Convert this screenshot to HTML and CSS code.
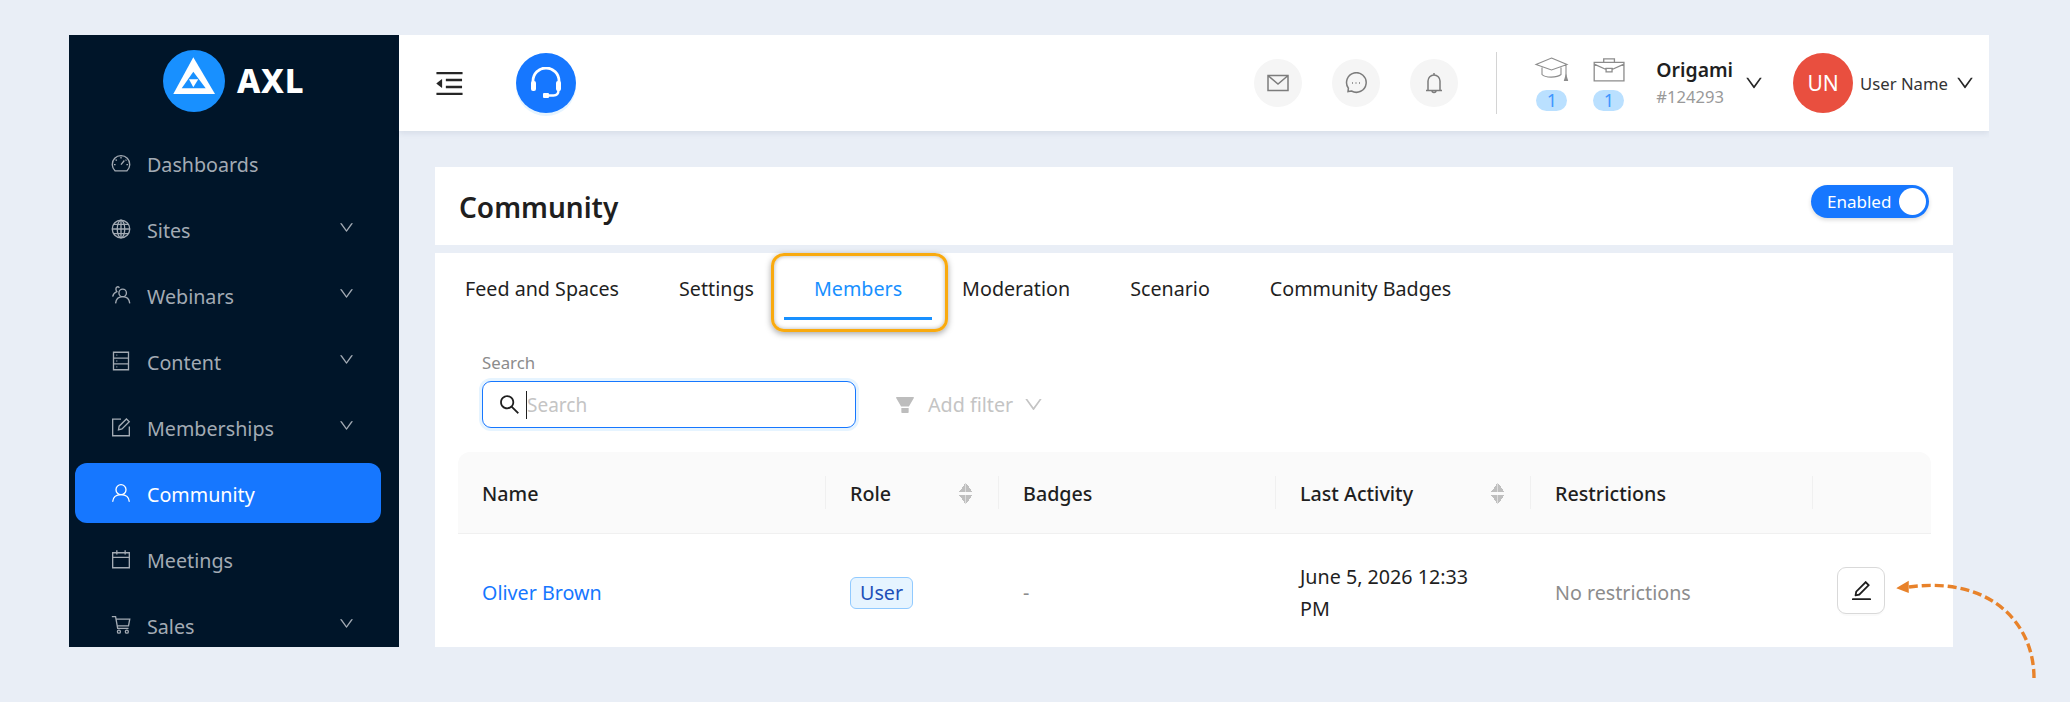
FILE: index.html
```html
<!DOCTYPE html>
<html lang="en">
<head>
    <meta charset="UTF-8">
    <meta name="viewport" content="width=device-width, initial-scale=1.0">
    <title>Community Members</title>
    <link rel="stylesheet" href="styles.css">
</head>
<body>

    <div class="app">

        <!-- Left navigation -->
        <aside class="sidebar">
            <div class="logo">
                <svg class="logo-mark" viewBox="0 0 62 62">
                    <circle cx="31" cy="31" r="31" fill="#1890ff"/>
                    <path d="M30.3 7.3L52 44H10.3z" fill="#fff"/>
                    <path d="M30.3 21.7L42.7 38.3H18.7z" fill="#1890ff"/>
                    <path d="M26 29.3H35.3L30.3 37.3z" fill="#fff"/>
                </svg>
                <span class="logo-text">AXL</span>
            </div>
            <nav class="nav">
                <div class="nav-item">
                    <svg class="nav-icon" viewBox="0 0 24 24"><path d="M5 21.5a10.5 10.5 0 1 1 14 0z"/><path d="M12 14l4-5M12 4.5v2M5.500 8l1.500 1M18.500 8l-1 1M3.500 14h2M18.500 14h2"/></svg>
                    <span class="nav-label">Dashboards</span>
                </div>
                <div class="nav-item">
                    <svg class="nav-icon" viewBox="0 0 24 24"><circle cx="12" cy="12" r="10.500"/><ellipse cx="12" cy="12" rx="4.500" ry="10.500"/><path d="M12 1.500v21M1.500 12h21M3 6.500h18M3 17.500h18"/></svg>
                    <span class="nav-label">Sites</span>
                    <svg class="nav-arrow" viewBox="64 64 896 896"><path d="M884 256h-75c-5.100 0-9.900 2.500-12.900 6.600L512 654.200 227.900 262.600c-3-4.100-7.800-6.600-12.900-6.600h-75c-6.500 0-10.300 7.400-6.500 12.700l352.600 486.100c12.800 17.600 39 17.600 51.700 0l352.600-486.100c3.900-5.300.1-12.700-6.400-12.700z"/></svg>
                </div>
                <div class="nav-item">
                    <svg class="nav-icon" viewBox="0 0 24 24"><circle cx="14" cy="9.500" r="4.500"/><path d="M5.500 22c.5-5 4-8 8.500-8s8 3 8.500 8M10 3.500C9.500 2.500 8.500 1.500 7 2.500 5.500 3.500 5.500 6 7 8c-2.500 1-4.500 3-5 6"/></svg>
                    <span class="nav-label">Webinars</span>
                    <svg class="nav-arrow" viewBox="64 64 896 896"><path d="M884 256h-75c-5.100 0-9.900 2.500-12.900 6.600L512 654.200 227.900 262.600c-3-4.100-7.800-6.600-12.900-6.600h-75c-6.500 0-10.300 7.400-6.500 12.700l352.600 486.100c12.800 17.600 39 17.600 51.700 0l352.600-486.100c3.900-5.300.1-12.700-6.400-12.700z"/></svg>
                </div>
                <div class="nav-item">
                    <svg class="nav-icon" viewBox="0 0 24 24"><path d="M3 1.500h18v21H3zM3 8.500h18M3 15.500h18M6.500 5h1M6.500 12h1M6.500 19h1"/></svg>
                    <span class="nav-label">Content</span>
                    <svg class="nav-arrow" viewBox="64 64 896 896"><path d="M884 256h-75c-5.100 0-9.900 2.500-12.900 6.600L512 654.200 227.900 262.600c-3-4.100-7.800-6.600-12.900-6.600h-75c-6.500 0-10.300 7.400-6.500 12.700l352.600 486.100c12.800 17.600 39 17.600 51.700 0l352.600-486.100c3.900-5.300.1-12.700-6.400-12.700z"/></svg>
                </div>
                <div class="nav-item">
                    <svg class="nav-icon" viewBox="0 0 24 24"><path d="M12 2.500H2v20h20v-11"/><path d="M9 15.500l.8-4.500L18.500 2.300l3.400 3.400-8.700 8.700z"/></svg>
                    <span class="nav-label">Memberships</span>
                    <svg class="nav-arrow" viewBox="64 64 896 896"><path d="M884 256h-75c-5.100 0-9.900 2.500-12.900 6.600L512 654.200 227.900 262.600c-3-4.100-7.800-6.600-12.900-6.600h-75c-6.500 0-10.300 7.400-6.500 12.700l352.600 486.100c12.800 17.600 39 17.600 51.700 0l352.600-486.100c3.900-5.300.1-12.700-6.400-12.700z"/></svg>
                </div>
                <div class="nav-item nav-item-active">
                    <svg class="nav-icon" viewBox="0 0 24 24"><circle cx="12" cy="8" r="6"/><path d="M2 22.500c.5-5.500 4.500-8.500 10-8.500s9.500 3 10 8.500"/></svg>
                    <span class="nav-label">Community</span>
                </div>
                <div class="nav-item">
                    <svg class="nav-icon" viewBox="0 0 24 24"><path d="M2 4.500h20v18H2zM2 10h20M7 1.500v5M17 1.500v5"/></svg>
                    <span class="nav-label">Meetings</span>
                </div>
                <div class="nav-item">
                    <svg class="nav-icon" viewBox="0 0 24 24"><path d="M1 2h4.500l2.500 14h13M6 5h16.500l-1.500 8H7.500"/><circle cx="9.500" cy="20" r="1.800"/><circle cx="19" cy="20" r="1.800"/></svg>
                    <span class="nav-label">Sales</span>
                    <svg class="nav-arrow" viewBox="64 64 896 896"><path d="M884 256h-75c-5.100 0-9.900 2.500-12.900 6.600L512 654.200 227.900 262.600c-3-4.100-7.800-6.600-12.900-6.600h-75c-6.500 0-10.300 7.400-6.500 12.700l352.600 486.100c12.800 17.600 39 17.600 51.700 0l352.600-486.100c3.900-5.300.1-12.700-6.400-12.700z"/></svg>
                </div>
            </nav>
        </aside>

        <div class="main">

            <!-- Top bar -->
            <header class="topbar">
                <svg class="menu-fold" viewBox="112 160 800 704"><path d="M408 442h480c4.400 0 8-3.600 8-8v-56c0-4.400-3.600-8-8-8H408c-4.400 0-8 3.600-8 8v56c0 4.400 3.600 8 8 8zm-8 204c0 4.400 3.600 8 8 8h480c4.400 0 8-3.600 8-8v-56c0-4.400-3.600-8-8-8H408c-4.400 0-8 3.600-8 8v56zm504-486H120c-4.400 0-8 3.600-8 8v56c0 4.400 3.600 8 8 8h784c4.400 0 8-3.600 8-8v-56c0-4.400-3.600-8-8-8zm0 632H120c-4.400 0-8 3.600-8 8v56c0 4.400 3.600 8 8 8h784c4.400 0 8-3.600 8-8v-56c0-4.400-3.600-8-8-8zM115.400 518.900L271.700 642c5.800 4.600 14.400.5 14.400-6.900V388.900c0-7.400-8.500-11.500-14.400-6.900L115.400 505.100a8.740 8.740 0 0 0 0 13.800z"/></svg>
                <div class="support">
                    <svg viewBox="0 0 32 32"><path d="M3 17v-3a13 13 0 0 1 26 0v3" fill="none" stroke="#fff" stroke-width="2.800"/><rect x="1" y="14" width="5" height="10" rx="2" fill="#fff"/><rect x="26" y="14" width="5" height="10" rx="2" fill="#fff"/><path d="M28.500 23c0 4-2 5.500-5 5.500h-6" fill="none" stroke="#fff" stroke-width="2.400"/><rect x="13" y="26" width="6" height="5" rx="1" fill="#fff"/></svg>
                </div>

                <div class="round-icons">
                    <div class="round-icon">
                        <svg viewBox="0 0 22 22"><path d="M1 3.500h20v15H1zM1.500 4L11 12l9.500-8"/></svg>
                    </div>
                    <div class="round-icon">
                        <svg viewBox="0 0 22 22"><path d="M3 19.500l.4-3.300A9.800 9.800 0 1 1 6.500 19zM7 11h1M10.500 11h1M14 11h1"/></svg>
                    </div>
                    <div class="round-icon">
                        <svg viewBox="0 0 22 22"><path d="M3 18.500h16M5 18.500V9a6 6 0 0 1 12 0v9.500M11 3V1M9 18.500a2 2 0 0 0 4 0"/></svg>
                    </div>
                </div>
                <div class="topbar-divider"></div>

                <div class="counters">
                    <div class="counter">
                        <svg viewBox="0 0 33 25"><path d="M16.500 1L32 7.500 16.500 13 1 7.500zM7 10.500v7c3 3.500 15 3.500 19 0v-7M31 8v11"/><path d="M31 18.500l1.500 5h-3z" fill="#8c8c8c"/></svg>
                        <span class="counter-badge">1</span>
                    </div>
                    <div class="counter">
                        <svg viewBox="0 0 27 21"><path d="M1 4.500h25v15.500H1zM9 4.500V1.500h9v3M1 6l10 4.500M26 6l-10 4.500M11 9.500h5v3h-5z"/></svg>
                        <span class="counter-badge">1</span>
                    </div>
                </div>

                <div class="org">
                    <div class="org-name">Origami</div>
                    <div class="org-id">#124293</div>
                </div>
                <svg class="caret caret-org" viewBox="64 64 896 896"><path d="M884 256h-75c-5.100 0-9.900 2.500-12.900 6.600L512 654.200 227.900 262.600c-3-4.100-7.800-6.600-12.900-6.600h-75c-6.500 0-10.300 7.400-6.500 12.700l352.600 486.100c12.800 17.600 39 17.600 51.700 0l352.600-486.100c3.900-5.300.1-12.700-6.400-12.700z"/></svg>

                <div class="avatar">UN</div>
                <span class="user-name">User Name</span>
                <svg class="caret" viewBox="64 64 896 896"><path d="M884 256h-75c-5.100 0-9.900 2.500-12.900 6.600L512 654.200 227.900 262.600c-3-4.100-7.800-6.600-12.900-6.600h-75c-6.500 0-10.300 7.400-6.500 12.700l352.600 486.100c12.800 17.600 39 17.600 51.700 0l352.600-486.100c3.900-5.300.1-12.700-6.400-12.700z"/></svg>
            </header>

            <main class="content">
                <section class="title-card">
                    <h1 class="page-title">Community</h1>
                    <div class="switch">
                        <span class="switch-label">Enabled</span>
                        <span class="switch-knob"></span>
                    </div>
                </section>

                <section class="panel">
                    <div class="tabs">
                        <div class="tab">Feed and Spaces</div>
                        <div class="tab">Settings</div>
                        <div class="tab tab-active">Members</div>
                        <div class="tab">Moderation</div>
                        <div class="tab">Scenario</div>
                        <div class="tab">Community Badges</div>
                    </div>

                    <div class="filters">
                        <div class="search">
                            <label class="search-label">Search</label>
                            <div class="search-box">
                                <svg class="search-icon" viewBox="64 64 896 896"><path d="M909.600 854.500L649.900 594.800C690.200 542.700 712 479 712 412c0-80.200-31.300-155.400-87.900-212.100-56.600-56.700-132-87.900-212.100-87.900s-155.500 31.300-212.100 87.900C143.200 256.500 112 331.800 112 412c0 80.100 31.300 155.500 87.900 212.100C256.500 680.800 331.800 712 412 712c67 0 130.600-21.800 182.700-62l259.700 259.600a8.200 8.200 0 0 0 11.600 0l43.600-43.500a8.200 8.200 0 0 0 0-11.600zM570.400 570.400C528 612.700 471.800 636 412 636s-116-23.300-158.400-65.600C211.300 528 188 471.800 188 412s23.300-116.100 65.600-158.400C296 211.300 352.200 188 412 188s116.100 23.200 158.400 65.600S636 352.200 636 412s-23.300 116.100-65.600 158.400z"/></svg>
                                <span class="search-cursor"></span>
                                <span class="search-placeholder">Search</span>
                            </div>
                        </div>
                        <div class="add-filter">
                            <svg class="filter-icon" viewBox="112 154 800 716"><path d="M349 838c0 17.700 14.200 32 31.800 32h262.400c17.600 0 31.800-14.300 31.800-32V642H349v196zm531.100-684H143.900c-24.500 0-39.800 26.700-27.500 48l221.300 376h348.800l221.300-376c12.100-21.300-3.200-48-27.700-48z"/></svg>
                            <span>Add filter</span>
                            <svg class="filter-caret" viewBox="64 64 896 896"><path d="M884 256h-75c-5.100 0-9.900 2.500-12.900 6.600L512 654.200 227.900 262.600c-3-4.100-7.800-6.600-12.900-6.600h-75c-6.500 0-10.300 7.400-6.500 12.700l352.600 486.100c12.800 17.600 39 17.600 51.700 0l352.600-486.100c3.900-5.300.1-12.700-6.400-12.700z"/></svg>
                        </div>
                    </div>

                    <div class="table">
                        <div class="table-head">
                            <div class="th">Name</div>
                            <div class="th">Role<span class="sort"></span></div>
                            <div class="th">Badges</div>
                            <div class="th">Last Activity<span class="sort"></span></div>
                            <div class="th">Restrictions</div>
                            <div class="th"></div>
                        </div>
                        <div class="table-row">
                            <div class="td"><a class="member-link">Oliver Brown</a></div>
                            <div class="td"><span class="role-tag">User</span></div>
                            <div class="td td-muted">-</div>
                            <div class="td td-date">June 5, 2026 12:33 PM</div>
                            <div class="td td-muted">No restrictions</div>
                            <div class="td">
                                <button class="edit-btn">
                                    <svg viewBox="112 112 800 800"><path d="M257.700 752c2 0 4-.2 6-.5L431.900 722c2-.4 3.900-1.300 5.300-2.800l423.900-423.900a9.960 9.960 0 0 0 0-14.100L694.900 114.900c-1.900-1.900-4.400-2.900-7.100-2.900s-5.200 1-7.100 2.900L256.800 538.800c-1.500 1.500-2.400 3.300-2.800 5.300l-29.500 168.200a33.500 33.500 0 0 0 9.400 29.800c6.600 6.400 14.900 9.900 23.800 9.900zm67.400-174.400L687.800 215l73.300 73.300-362.700 362.600-88.900 15.700 15.600-89zM880 836H144c-17.700 0-32 14.300-32 32v36c0 4.400 3.600 8 8 8h784c4.400 0 8-3.600 8-8v-36c0-17.700-14.300-32-32-32z"/></svg>
                                </button>
                            </div>
                        </div>
                    </div>
                </section>
            </main>
        </div>
    </div>

    <!-- Annotations drawn over the screenshot -->
    <div class="tab-highlight"></div>
    <svg class="callout" viewBox="0 0 150 105">
        <path d="M139 100C139 45 95 -2 14 9" fill="none" stroke="#e8822a" stroke-width="3.400" stroke-dasharray="9 4"/>
        <path d="M3 10L13 4 13 14z" fill="#e8822a" stroke="#e8822a" stroke-width="1.500"/>
    </svg>

</body>
</html>
```

FILE: styles.css
```css
* {
    box-sizing: border-box;
}
body {
    font-family: "Noto Sans", Arial, sans-serif;
    margin: 0;
    padding: 35px 81px 55px 69px;
    background-color: #e9eef6;
    color: #1f1f1f;
    height: 702px;
    overflow: hidden;
}
.app {
    display: flex;
    height: 612px;
    overflow: hidden;
}

/* sidebar */
.sidebar {
    width: 330px;
    flex-shrink: 0;
    background-color: #001529;
}
.logo {
    display: flex;
    align-items: center;
    gap: 12px;
    height: 92px;
    padding: 0 0 0 94px;
}
.logo-mark {
    width: 62px;
    height: 62px;
}
.logo-text {
    font-size: 33px;
    font-weight: 800;
    color: #fff;
    letter-spacing: 0.7px;
    margin-top: -2px;
}
.nav {
    display: flex;
    flex-direction: column;
    gap: 6px;
    padding: 6px 18px 0 6px;
}
.nav-item {
    display: flex;
    align-items: center;
    flex-shrink: 0;
    height: 60px;
    padding: 0 27px 0 36px;
    border-radius: 12px;
    color: #a3abb4;
    font-size: 19.7px;
}
.nav-item-active {
    background-color: #1677ff;
    color: #fff;
}
.nav-label {
    margin-top: 2px;
}
.nav-icon {
    width: 20px;
    height: 20px;
    margin-right: 16px;
    fill: none;
    stroke: currentColor;
    stroke-width: 1.600;
}
.nav-arrow {
    width: 15px;
    height: 15px;
    margin-left: auto;
    margin-top: -4px;
    fill: currentColor;
}

/* top bar */
.main {
    flex: 1;
    display: flex;
    flex-direction: column;
    min-width: 0;
}
.topbar {
    display: flex;
    align-items: center;
    height: 96px;
    flex-shrink: 0;
    padding: 0 15px 0 37px;
    background-color: #fff;
    box-shadow: 0 2px 6px rgba(40, 60, 100, 0.1);
    position: relative;
}
.menu-fold {
    width: 27px;
    height: 23px;
    fill: #262626;
}
.support {
    width: 60px;
    height: 60px;
    margin-left: 53px;
    border-radius: 50%;
    background-color: #1677ff;
    box-shadow: 0 3px 0 #e6f4ff;
    display: flex;
    align-items: center;
    justify-content: center;
}
.support svg {
    width: 32px;
    height: 32px;
}
.round-icons {
    display: flex;
    gap: 30px;
    margin-left: auto;
}
.round-icon {
    width: 48px;
    height: 48px;
    border-radius: 50%;
    background-color: #f5f5f5;
    display: flex;
    align-items: center;
    justify-content: center;
}
.round-icon svg {
    width: 22px;
    height: 22px;
    fill: none;
    stroke: #7c7c7c;
    stroke-width: 1.500;
}
.topbar-divider {
    width: 1px;
    height: 62px;
    margin: 0 0 0 38px;
    background-color: #d4d4d4;
}
.counters {
    display: flex;
    gap: 26px;
    margin-left: 39px;
    padding-top: 2px;
}
.counter {
    width: 31px;
    display: flex;
    flex-direction: column;
    align-items: center;
}
.counter svg {
    height: 25px;
    fill: none;
    stroke: #8c8c8c;
    stroke-width: 1.100;
    overflow: visible;
}
.counter-badge {
    width: 31px;
    height: 21px;
    margin-top: 8px;
    border-radius: 11px;
    background-color: #bae0ff;
    color: #4096ff;
    font-size: 18px;
    line-height: 21px;
    text-align: center;
}
.org {
    margin-left: 32px;
}
.org-name {
    font-size: 19.4px;
    font-weight: 600;
    line-height: 28px;
}
.org-id {
    font-size: 16.6px;
    line-height: 26px;
    color: #999;
}
.caret {
    width: 18px;
    height: 18px;
    fill: #262626;
    margin-left: 8px;
}
.caret-org {
    margin-left: 12px;
    margin-right: 30px;
}
.avatar {
    width: 60px;
    height: 60px;
    border-radius: 50%;
    background-color: #e94f3f;
    color: #fff;
    font-size: 21px;
    display: flex;
    align-items: center;
    justify-content: center;
}
.user-name {
    margin-left: 7px;
    font-size: 16.7px;
    color: #333;
}

/* content */
.content {
    flex: 1;
    display: flex;
    flex-direction: column;
    gap: 8px;
    padding: 36px 36px 0;
    min-height: 0;
}
.title-card {
    height: 78px;
    flex-shrink: 0;
    display: flex;
    justify-content: space-between;
    padding: 18px 24px 0;
    background-color: #fff;
}
.page-title {
    margin: 0;
    font-size: 28px;
    font-weight: 600;
    line-height: 44px;
}
.switch {
    width: 118px;
    height: 33px;
    border-radius: 17px;
    background-color: #1677ff;
    display: flex;
    align-items: center;
    justify-content: space-between;
    padding: 0 3px 0 16px;
    box-shadow: 0 2px 4px rgba(0, 0, 0, 0.15);
}
.switch-label {
    color: #fff;
    font-size: 17px;
}
.switch-knob {
    width: 27px;
    height: 27px;
    border-radius: 50%;
    background-color: #fff;
}
.panel {
    flex: 1;
    min-height: 0;
    overflow: hidden;
    background-color: #fff;
}

/* tabs */
.tabs {
    display: flex;
}
.tab {
    padding: 23px 30px 15px;
    border-bottom: 3px solid transparent;
    font-size: 19.7px;
    line-height: 26px;
}
.tab-active {
    color: #1890ff;
    border-bottom-color: #1890ff;
}

/* search row */
.filters {
    display: flex;
    align-items: flex-end;
    padding: 32px 0 0 47px;
}
.search-label {
    display: block;
    font-size: 16.8px;
    line-height: 22px;
    margin-bottom: 7px;
    color: #8c8c8c;
}
.search-box {
    width: 374px;
    height: 47px;
    display: flex;
    align-items: center;
    padding-left: 16px;
    border: 1px solid #1677ff;
    border-radius: 9px;
    box-shadow: 0 0 0 3px #e6f4ff;
}
.search-icon {
    width: 21px;
    height: 21px;
    fill: #1f1f1f;
}
.search-cursor {
    width: 1px;
    height: 28px;
    margin-left: 6px;
    background-color: #1f1f1f;
}
.search-placeholder {
    font-size: 19px;
    color: #c4c4c4;
}
.add-filter {
    display: flex;
    align-items: center;
    height: 47px;
    margin-left: 40px;
    font-size: 19.7px;
    color: #c4c4c4;
}
.filter-icon {
    width: 18px;
    height: 16px;
    margin-right: 14px;
    fill: #bdbdbd;
}
.filter-caret {
    width: 19px;
    height: 19px;
    margin-left: 11px;
    fill: #c4c4c4;
}

/* table */
.table {
    margin: 24px 22px 0 23px;
}
.table-head,
.table-row {
    display: grid;
    grid-template-columns: 368px 173px 277px 255px 282px 1fr;
}
.table-head {
    height: 82px;
    align-items: center;
    border-bottom: 1px solid #f0f0f0;
    border-radius: 12px 12px 0 0;
    background-color: #fafafa;
}
.th {
    display: flex;
    align-items: center;
    justify-content: space-between;
    height: 33px;
    padding: 2px 24px 0;
    font-size: 19.7px;
    font-weight: 500;
    border-right: 1px solid #f0f0f0;
}
.th:last-child {
    border-right: none;
}
.sort {
    display: block;
    width: 13px;
    height: 21px;
    margin-right: 2px;
    background:
        linear-gradient(to top left, #bfbfbf 50%, transparent 50%) left top / 50% 9px no-repeat,
        linear-gradient(to top right, #bfbfbf 50%, transparent 50%) right top / 50% 9px no-repeat,
        linear-gradient(to bottom left, #bfbfbf 50%, transparent 50%) left bottom / 50% 9px no-repeat,
        linear-gradient(to bottom right, #bfbfbf 50%, transparent 50%) right bottom / 50% 9px no-repeat;
}
.table-row {
    height: 118px;
    align-items: center;
}
.td {
    padding: 0 24px;
    font-size: 19.7px;
    line-height: 32px;
}
.td-date {
    padding-right: 60px;
}
.td-muted {
    color: #8c8c8c;
}
.member-link {
    color: #1677ff;
}
.role-tag {
    display: inline-block;
    height: 32px;
    padding: 0 9px;
    border: 1px solid #91caff;
    border-radius: 6px;
    background-color: #e6f4ff;
    color: #1d4fb8;
    line-height: 30px;
}
.edit-btn {
    display: flex;
    align-items: center;
    justify-content: center;
    width: 48px;
    height: 47px;
    margin-bottom: 5px;
    padding: 0;
    border: 1px solid #d9d9d9;
    border-radius: 9px;
    background-color: #fff;
    box-shadow: 0 2px 0 rgba(0, 0, 0, 0.02);
}
.edit-btn svg {
    width: 19px;
    height: 19px;
    fill: #1f1f1f;
}

/* annotations */
.tab-highlight {
    position: absolute;
    left: 771px;
    top: 253px;
    width: 177px;
    height: 79px;
    border: 3px solid #f9aa0f;
    border-radius: 13px;
    box-shadow: 0 2px 6px rgba(0, 0, 0, 0.35), inset 0 0 4px rgba(0, 0, 0, 0.3);
}
.callout {
    position: absolute;
    left: 1895px;
    top: 578px;
    width: 150px;
    height: 105px;
}
```
